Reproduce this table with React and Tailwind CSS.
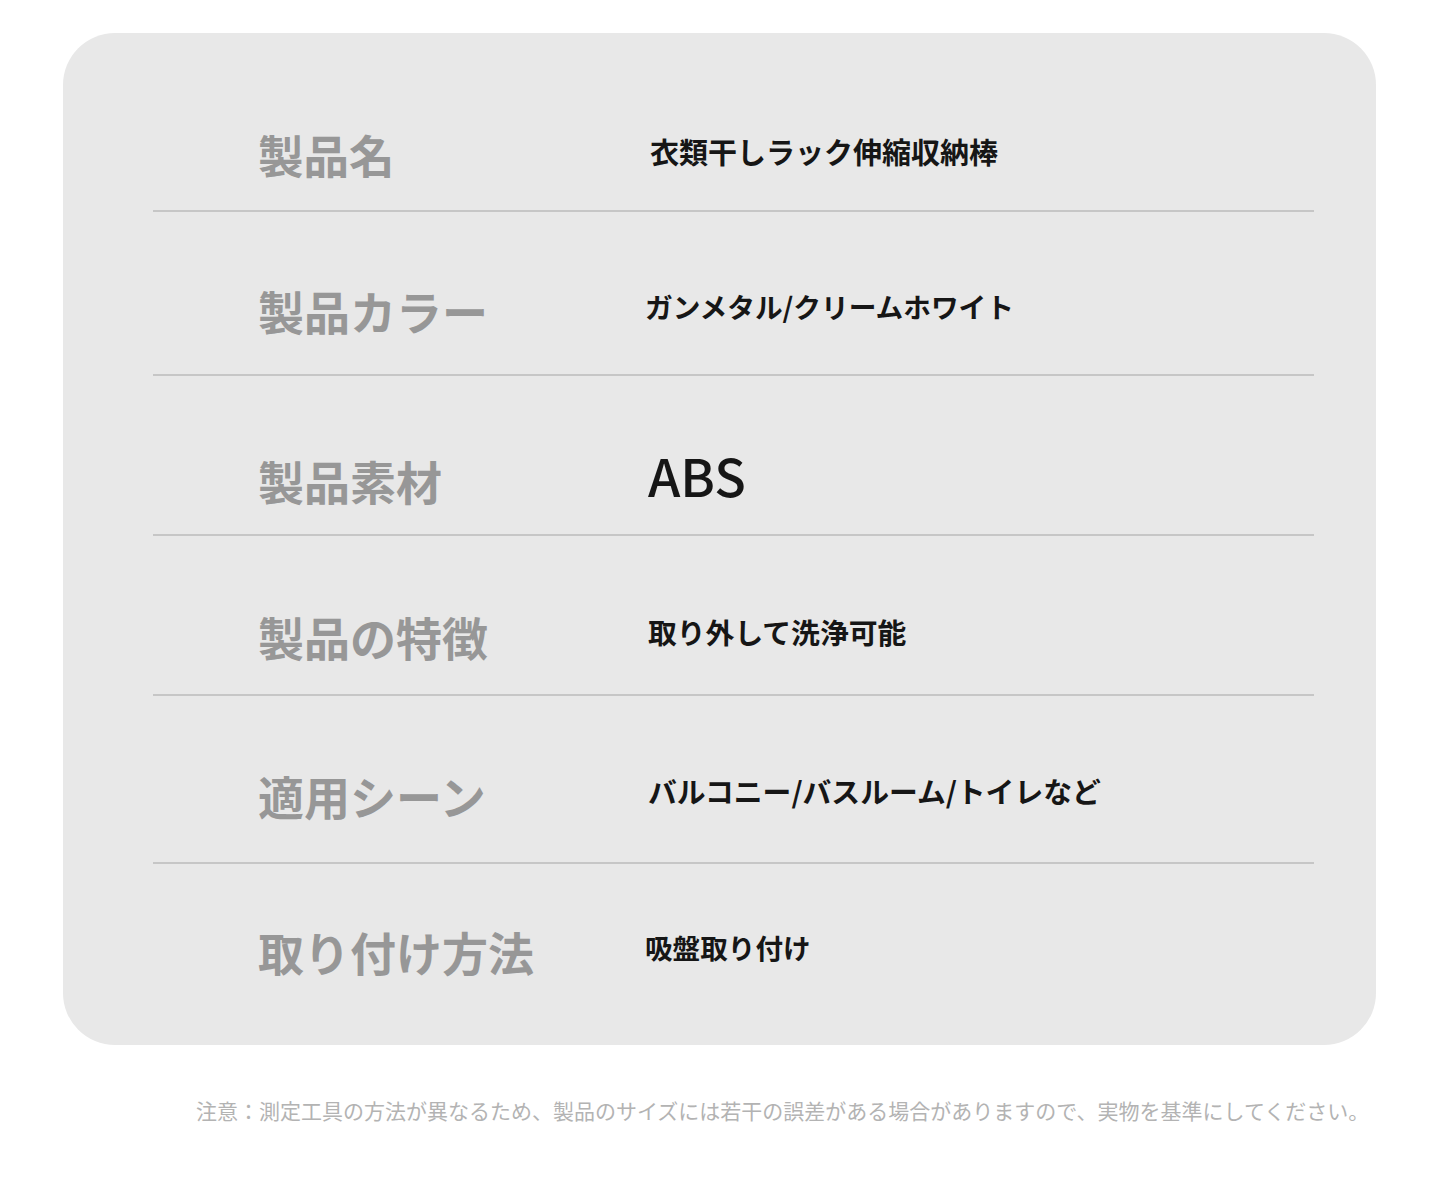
import React from "react";

const rows = [
  { label: "製品名", value: "衣類干しラック伸縮収納棒", h: "h-[177px]", lp: "pt-[99px]", vp: "pt-[104px]", vs: "text-[29px]", vx: "pl-[2px]", ls: "text-[45.5px]" },
  { label: "製品カラー", value: "ガンメタル/クリームホワイト", h: "h-[162px]", lp: "pt-[75px]", vp: "pt-[81px]", vs: "text-[27.7px]", vx: "-ml-[3px]", ls: "text-[46px]" },
  { label: "製品素材", value: "ABS", h: "h-[158px]", lp: "pt-[81px]", vp: "pt-[73px]", abs: true, ls: "text-[46px]" },
  { label: "製品の特徴", value: "取り外して洗浄可能", h: "h-[158px]", lp: "pt-[77px]", vp: "pt-[82px]", vs: "text-[28.8px]", vx: "pl-0", ls: "text-[46px]" },
  { label: "適用シーン", value: "バルコニー/バスルーム/トイレなど", h: "h-[166px]", lp: "pt-[76px]", vp: "pt-[81px]", vs: "text-[28.8px]", vx: "pl-0", ls: "text-[46px]" },
  { label: "取り付け方法", value: "吸盤取り付け", h: "h-[181px]", lp: "pt-[64px]", vp: "pt-[70px]", vs: "text-[27.6px]", vx: "-ml-[3px]", ls: "text-[46px]", last: true },
];

export default function App() {
  return (
    <div
      className="w-[1440px] h-[1203px] bg-white overflow-hidden"
      style={{ fontFamily: '"Noto Sans CJK JP", "Noto Sans", sans-serif' }}
    >
      <div className="pt-[33px] pl-[63px]">
        <div className="w-[1313px] h-[1012px] bg-[#e8e8e8] rounded-[52px] pl-[90px] pr-[62px]">
          {rows.map((r, i) => (
            <div key={i} className="flex flex-col">
              <div className={`flex items-start ${r.h}`}>
                <div className={`w-[495px] pl-[105px] ${r.lp}`}>
                  <span className={`block ${r.ls} leading-none font-bold text-[#979797] whitespace-nowrap`}>
                    {r.label}
                  </span>
                </div>
                <div className={r.abs ? r.vp : `${r.vp} ${r.vx}`}>
                  {r.abs ? (
                    <span className="block text-[52px] leading-none font-medium text-[#161616] whitespace-nowrap">
                      {r.value}
                    </span>
                  ) : (
                    <span className={`block ${r.vs} leading-none font-bold text-[#161616] whitespace-nowrap`}>
                      {r.value}
                    </span>
                  )}
                </div>
              </div>
              {!r.last && <div className="h-[2px] bg-[#c6c6c6]" />}
            </div>
          ))}
        </div>
      </div>
      <div className="pt-[55px] pl-[196px]">
        <p className="text-[21px] leading-none text-[#b3b3b3] whitespace-nowrap">
          注意：測定工具の方法が異なるため、製品のサイズには若干の誤差がある場合がありますので、実物を基準にしてください。
        </p>
      </div>
    </div>
  );
}
